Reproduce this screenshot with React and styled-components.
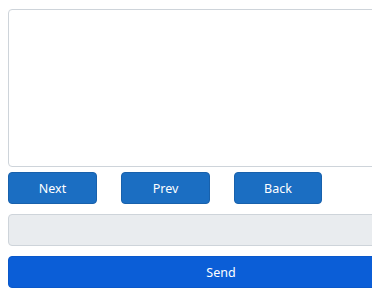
import { createGlobalStyle, styled } from 'styled-components';

const GlobalStyle = createGlobalStyle`
    html, body {
        margin: 0;
        background: #fff;
        overflow: hidden;
        font-family: "Segoe UI", "Noto Sans", "Liberation Sans", sans-serif;
    }
`;

const Page = styled.div`
    width: 426px;
    padding: 9px 0 0 8px;
    display: flex;
    flex-direction: column;
`;

const Output = styled.textarea`
    box-sizing: border-box;
    width: 100%;
    height: 158px;
    border: 1px solid #ced4da;
    border-radius: 4px;
    resize: none;
    background: #fff;
    margin: 0;
`;

const ButtonRow = styled.div`
    display: flex;
    gap: 24px;
    margin-top: 5px;
`;

const NavButton = styled.button`
    box-sizing: border-box;
    width: ${(p) => p.$width || 89}px;
    height: 32px;
    border: 1px solid #1861ac;
    border-radius: 4px;
    background: #1b6ec2;
    color: #fff;
    font-family: inherit;
    font-size: 12.5px;
    padding: 0;
`;

const Field = styled.input`
    box-sizing: border-box;
    width: 100%;
    height: 32px;
    margin-top: 10px;
    border: 1px solid #ced4da;
    border-radius: 4px;
    background: #e9ecef;
`;

const SendButton = styled.button`
    box-sizing: border-box;
    width: 100%;
    height: 32px;
    margin-top: 10px;
    border: 1px solid #0a58ca;
    border-radius: 4px;
    background: #0b5ed7;
    color: #fff;
    font-family: inherit;
    font-size: 12.5px;
    padding: 0;
    text-align: center;
`;

export default function App() {
    return (
        <>
            <GlobalStyle />
            <Page>
                <Output readOnly />
                <ButtonRow>
                    <NavButton>Next</NavButton>
                    <NavButton>Prev</NavButton>
                    <NavButton $width={88}>Back</NavButton>
                </ButtonRow>
                <Field disabled />
                <SendButton>Send</SendButton>
            </Page>
        </>
    );
}
